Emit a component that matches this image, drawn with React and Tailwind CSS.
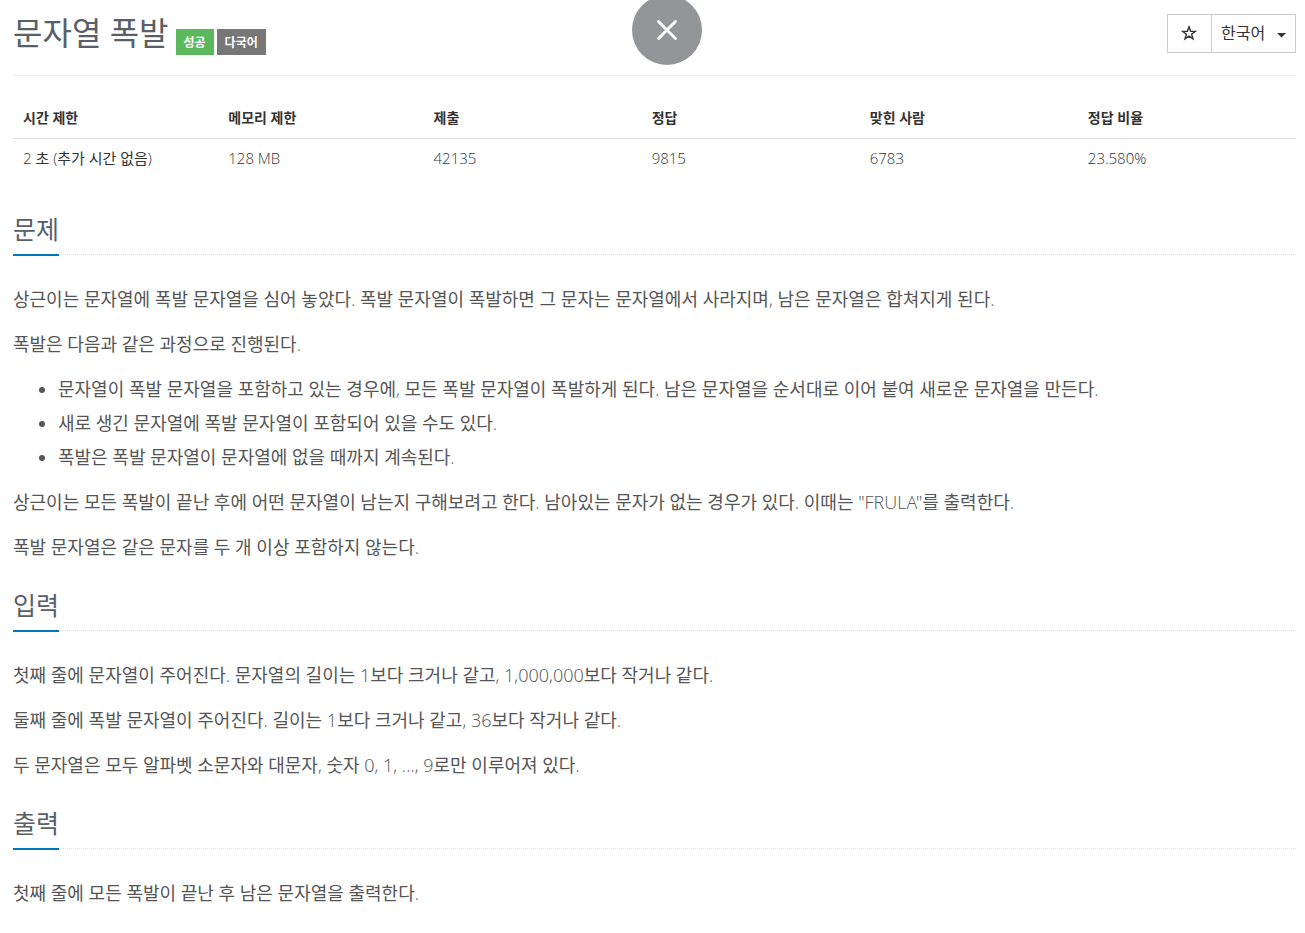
import { X } from "lucide-react";

const info = [
  { title: "시간 제한", value: "2 초 (추가 시간 없음)", width: "w-[16%]" },
  { title: "메모리 제한", value: "128 MB", width: "w-[16%]" },
  { title: "제출", value: "42135", width: "w-[17%]" },
  { title: "정답", value: "9815", width: "w-[17%]" },
  { title: "맞힌 사람", value: "6783", width: "w-[17%]" },
  { title: "정답 비율", value: "23.580%", width: "w-[17%]" },
];

const Section = ({ title, children }) => {
  return (
    <section className="mt-7">
      <div className="flex border-b border-dotted border-[#dfe3e9]">
        <h2 className="-mb-0.5 h-10 border-b-2 border-[#0076c0] text-[25px] leading-[26px] text-[#585f69]">
          {title}
        </h2>
      </div>
      <div className="mt-[27px] flex flex-col gap-[11px] text-lg leading-[34px] text-[#555]">
        {children}
      </div>
    </section>
  );
};

const App = () => {
  return (
    <div className="bg-white pt-3.5 pr-[9px] pb-6 pl-[13px] font-['Open_Sans_Light','Open_Sans','Noto_Sans_CJK_KR',sans-serif] font-normal text-[#333]">
      <header className="flex h-[62px] items-start justify-between border-b border-[#eee]">
        <div className="flex h-[41px] items-end gap-[3px]">
          <h1 className="mr-1 self-start text-[32px] leading-[38px] text-[#585f69]">
            문자열 폭발
          </h1>
          <span className="h-[26px] bg-[#5cb85c] px-2 text-xs leading-[27px] font-bold text-white">
            성공
          </span>
          <span className="h-[26px] bg-[#777] px-2 text-xs leading-[27px] font-bold text-white">
            다국어
          </span>
        </div>
        <div className="flex h-[39px] border border-[#ccc]">
          <button
            type="button"
            aria-label="즐겨찾기"
            className="flex w-11 items-center justify-center border-r border-[#ccc] pr-0.5 pb-0.5"
          >
            <svg viewBox="0 0 16 16" className="size-4" fill="none" stroke="#333" strokeWidth="1.4">
              <path d="M8 1.8 9.6 6.2 14.4 6.3 10.6 9.2 12 13.8 8 11.1 4 13.8 5.4 9.2 1.6 6.3 6.4 6.2Z" />
            </svg>
          </button>
          <button type="button" className="flex w-[83px] items-center justify-between px-[9px] pb-0.5 text-base">
            한국어
            <svg viewBox="0 0 9 5" className="mt-1.5 h-[5px] w-[9px]" fill="#333">
              <path d="M0 0H9L4.5 4.5Z" />
            </svg>
          </button>
        </div>
      </header>

      {/* close button over the page */}
      <button
        type="button"
        aria-label="닫기"
        className="absolute -top-[5px] left-1/2 ml-[-21px] flex size-[70px] items-center justify-center rounded-full bg-[#939598] text-white"
      >
        <X size={34} strokeWidth={2} />
      </button>

      <table className="mt-[22px] mb-[37px] w-full table-fixed text-left text-[15px] leading-5">
        <thead>
          <tr className="border-b border-[#ddd]">
            {info.map((item) => (
              <th key={item.title} className={`${item.width} px-2.5 py-[10px] text-sm font-bold`}>
                {item.title}
              </th>
            ))}
          </tr>
        </thead>
        <tbody>
          <tr>
            {info.map((item) => (
              <td key={item.title} className="px-2.5 pt-[9px] pb-[11px]">
                {item.value}
              </td>
            ))}
          </tr>
        </tbody>
      </table>

      <main>
        <Section title="문제">
          <p>
            상근이는 문자열에 폭발 문자열을 심어 놓았다. 폭발 문자열이 폭발하면 그 문자는 문자열에서 사라지며, 남은 문자열은 합쳐지게 된다.
          </p>
          <p>폭발은 다음과 같은 과정으로 진행된다.</p>
          <ul className="list-disc pl-[45px]">
            <li>
              문자열이 폭발 문자열을 포함하고 있는 경우에, 모든 폭발 문자열이 폭발하게 된다. 남은 문자열을 순서대로 이어 붙여 새로운 문자열을 만든다.
            </li>
            <li>새로 생긴 문자열에 폭발 문자열이 포함되어 있을 수도 있다.</li>
            <li>폭발은 폭발 문자열이 문자열에 없을 때까지 계속된다.</li>
          </ul>
          <p>
            상근이는 모든 폭발이 끝난 후에 어떤 문자열이 남는지 구해보려고 한다. 남아있는 문자가 없는 경우가 있다. 이때는 "FRULA"를 출력한다.
          </p>
          <p>폭발 문자열은 같은 문자를 두 개 이상 포함하지 않는다.</p>
        </Section>

        <Section title="입력">
          <p>
            첫째 줄에 문자열이 주어진다. 문자열의 길이는 1보다 크거나 같고, 1,000,000보다 작거나 같다.
          </p>
          <p>둘째 줄에 폭발 문자열이 주어진다. 길이는 1보다 크거나 같고, 36보다 작거나 같다.</p>
          <p>두 문자열은 모두 알파벳 소문자와 대문자, 숫자 0, 1, ..., 9로만 이루어져 있다.</p>
        </Section>

        <Section title="출력">
          <p>첫째 줄에 모든 폭발이 끝난 후 남은 문자열을 출력한다.</p>
        </Section>
      </main>
    </div>
  );
};

export default App;
